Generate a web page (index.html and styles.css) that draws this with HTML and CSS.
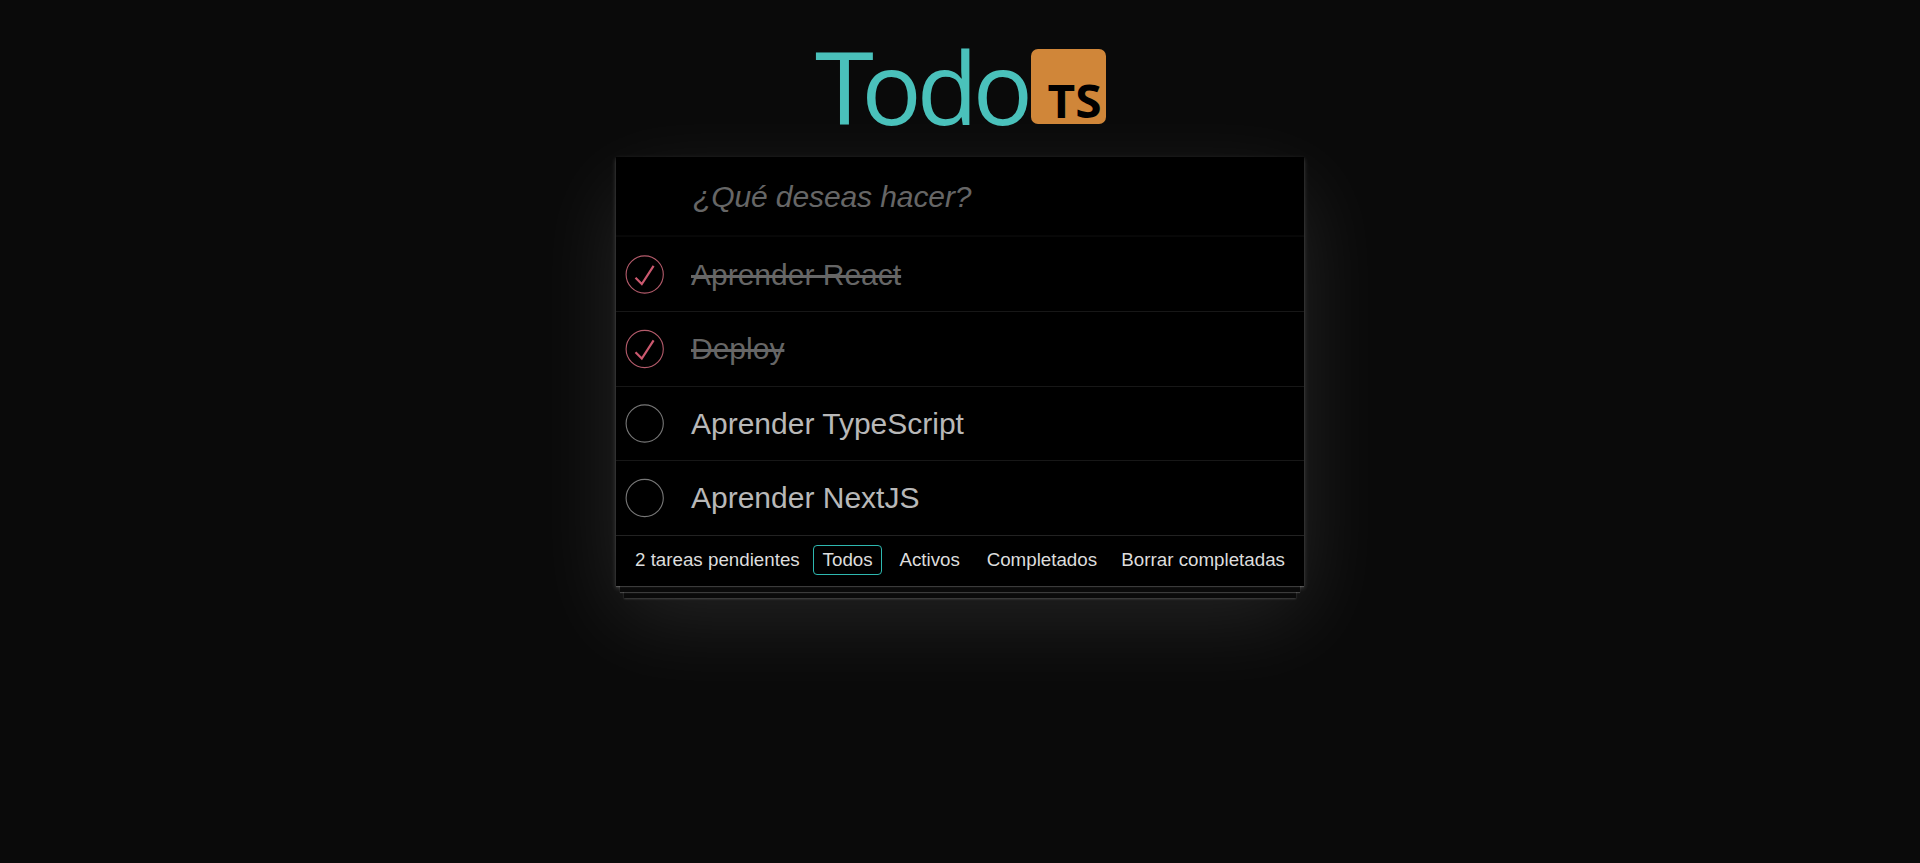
FILE: index.html
```html
<!DOCTYPE html>
<html lang="es">
<head>
<meta charset="utf-8">
<title>Todo TS</title>
<link rel="stylesheet" href="styles.css">
</head>
<body>
<main class="app">
  <h1 class="brand">
    <span class="brand-name"><span class="brand-initial">T</span>odo</span>
    <svg class="brand-logo" width="75" height="75" viewBox="0 0 75 75"><rect width="75" height="75" rx="7" fill="#d08639"/><text class="brand-ts" x="16.5" y="69" textLength="54" lengthAdjust="spacingAndGlyphs">TS</text></svg>
  </h1>
  <section class="card">
    <input class="new-todo" type="text" placeholder="¿Qué deseas hacer?">
    <ul class="todo-list">
      <li class="todo done">
        <svg class="toggle" width="40" height="40" viewBox="0 0 40 40"><circle cx="19.7" cy="19.5" r="18.6"/><path d="M10.5 22.8 16.8 29.1 28.6 10.8"/></svg>
        <span class="todo-text">Aprender React</span>
      </li>
      <li class="todo done">
        <svg class="toggle" width="40" height="40" viewBox="0 0 40 40"><circle cx="19.7" cy="20" r="18.6"/><path d="M10.5 23.3 16.8 29.6 28.6 11.3"/></svg>
        <span class="todo-text">Deploy</span>
      </li>
      <li class="todo">
        <svg class="toggle" width="40" height="40" viewBox="0 0 40 40"><circle cx="19.7" cy="19.5" r="18.6"/></svg>
        <span class="todo-text">Aprender TypeScript</span>
      </li>
      <li class="todo">
        <svg class="toggle" width="40" height="40" viewBox="0 0 40 40"><circle cx="19.7" cy="20" r="18.6"/></svg>
        <span class="todo-text">Aprender NextJS</span>
      </li>
    </ul>
    <footer class="footer">
      <span class="count">2 tareas pendientes</span>
      <nav class="filters">
        <a class="filter selected">Todos</a>
        <a class="filter">Activos</a>
        <a class="filter">Completados</a>
      </nav>
      <button class="clear" type="button">Borrar completadas</button>
    </footer>
  </section>
</main>
</body>
</html>
```
FILE: styles.css
```css
* { box-sizing: border-box; }
html { background: #0a0a0a; }
body {
  margin: 0;
  min-height: 100vh;
  background: #0a0a0a;
  font-family: "Liberation Sans", Arial, sans-serif;
  color: #b8b8b8;
}
.app { width: 688px; margin: 0 auto; padding-top: 49px; }
.brand {
  display: flex;
  justify-content: flex-end;
  height: 108px;
  margin: 0;
  padding-right: 198px;
  font-family: "Open Sans", "Noto Sans", sans-serif;
  font-weight: 400;
}
.brand-name {
  margin-right: 3px;
  font-size: 100px;
  line-height: 75px;
  letter-spacing: -5px;
  color: #4ac1bb;
}
.brand-initial {
  display: inline-block;
  margin-right: -3.5px;
  transform: scaleX(1.07);
  transform-origin: left;
}
.brand-logo { flex: none; overflow: visible; }
.brand-ts { font-size: 46px; font-weight: 700; fill: #000; }
.card {
  background: #000;
  box-shadow:
    0 1px 1px rgba(255, 255, 255, .2),
    0 10px 0 -4px #0a0a0a,
    0 11px 1px -4px rgba(255, 255, 255, .2),
    0 20px 0 -8px #0a0a0a,
    0 21px 2px -8px rgba(255, 255, 255, .2),
    0 2px 5px rgba(255, 255, 255, .2),
    0 31px 84px rgba(255, 255, 255, .11);
}
.new-todo {
  display: block;
  width: 100%;
  height: 80px;
  padding: 0 20px 0 77px;
  border: 0;
  background: transparent;
  box-shadow: inset 0 -2px 1px rgba(255, 255, 255, .03);
  font: 30px "Liberation Sans", Arial, sans-serif;
  letter-spacing: -.1px;
}
.new-todo::placeholder { color: #666; font-style: italic; opacity: 1; }
.todo-list {
  display: grid;
  grid-template-rows: 75px 75px 74px 74px;
  margin: 0;
  padding: 0;
  list-style: none;
}
.todo {
  display: flex;
  align-items: center;
  padding-left: 9px;
  gap: 26px;
  border-bottom: 1px solid #171717;
  font-size: 30px;
}
.todo:first-child { padding-top: 1px; }
.todo:last-child { border-bottom: 0; }
.toggle { fill: none; stroke: #777; stroke-width: 1.1; }
.done .toggle { stroke: #b45b6b; }
.done .toggle path { stroke: #cc596f; stroke-width: 2.2; }
.done .todo-text { color: #666; text-decoration: line-through; }
.footer {
  display: flex;
  align-items: center;
  justify-content: space-between;
  height: 51px;
  padding: 0 19px 3px;
  border-top: 1px solid #222;
  font-size: 18.75px;
  color: #ddd;
}
.filters { display: flex; gap: 7.2px; padding: 1px 1.4px 0 0; }
.filter { padding: 3px 8.8px; border: 1px solid transparent; border-radius: 4px; }
.filter.selected { border-color: #2eb8b0; }
.clear { padding: 0; border: 0; background: none; color: inherit; font: inherit; }
```
